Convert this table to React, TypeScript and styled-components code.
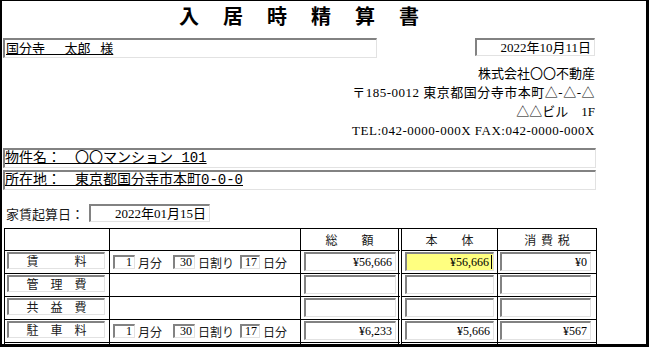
import styled, { createGlobalStyle, css } from 'styled-components'

const GlobalStyle = createGlobalStyle`
  html, body {
    margin: 0;
    padding: 0;
    background: #fff;
  }
  body {
    font-family: "Liberation Serif", "Noto Sans CJK JP", serif;
    color: #000;
    overflow: hidden;
  }
`

const sunken = css`
  box-sizing: border-box;
  background: #fff;
  border-top: 2px solid #828282;
  border-left: 2px solid #828282;
  border-right: 1px solid #e2e2e2;
  border-bottom: 1px solid #e2e2e2;
`

const Frame = styled.div`
  box-sizing: border-box;
  width: 649px;
  height: 347px;
  border-style: solid;
  border-color: #000;
  border-width: 1px 3px 3px 2px;
  background: #fff;
  overflow: hidden;
`

const Sheet = styled.div`
  width: 594px;
  margin-left: 1px;
  display: flex;
  flex-direction: column;
`

const Title = styled.h1`
  margin: 0;
  height: 37px;
  font-family: "Noto Sans CJK JP", sans-serif;
  font-size: 20px;
  font-weight: 700;
  line-height: 29px;
  text-align: center;
  letter-spacing: 24px;
  text-indent: 22px;
`

const TopRow = styled.div`
  display: flex;
  justify-content: space-between;
  align-items: flex-start;
  height: 20px;
  padding-right: 2px;
`

const NameField = styled.div`
  ${sunken};
  width: 374px;
  height: 20px;
  padding-left: 1px;
  font-size: 13px;
  line-height: 17px;
  white-space: pre;
  text-decoration: underline;
`

const DateField = styled.div<{ $width: number }>`
  ${sunken};
  width: ${p => p.$width}px;
  height: 18px;
  padding-right: 3px;
  font-size: 13px;
  line-height: 15px;
  text-align: right;
`

const Company = styled.div`
  margin-top: 6px;
  padding-right: 2px;
  text-align: right;
  font-size: 13px;
  line-height: 19px;
`

const CompanyLine = styled.div<{ $wide?: boolean }>`
  letter-spacing: ${p => (p.$wide ? 0.5 : 0)}px;
`

const PropertyList = styled.div`
  margin-top: 8px;
  display: flex;
  flex-direction: column;
  gap: 2px;
`

const PropertyField = styled.div`
  ${sunken};
  width: 593px;
  height: 20px;
  font-family: "Liberation Mono", "Noto Sans CJK JP", monospace;
  font-size: 14px;
  line-height: 17px;
  white-space: pre;
  text-decoration: underline;
`

const StartRow = styled.div`
  margin-top: 15px;
  display: flex;
  align-items: center;
  gap: 5px;
  padding-left: 3px;
  height: 16px;
`

const StartLabel = styled.span`
  font-family: "Noto Sans CJK JP", sans-serif;
  font-size: 13px;
  color: #1a1a1a;
`

const Table = styled.div`
  margin: 7px 0 0 1px;
  display: grid;
  grid-template-columns: 105px 191px 101px 96px 99px;
  grid-template-rows: 22px repeat(5, 23px);
  border-top: 1px solid #000;
  border-left: 1px solid #000;
`

const Cell = styled.div<{ $double?: boolean; $pad?: number }>`
  box-sizing: border-box;
  display: flex;
  align-items: center;
  padding-left: ${p => p.$pad ?? 0}px;
  border-bottom: 1px solid #000;
  border-right: ${p => (p.$double ? '4px double #000' : '1px solid #000')};
`

const HeadCell = styled(Cell)`
  justify-content: center;
  font-family: "Noto Sans CJK JP", sans-serif;
  font-size: 12px;
  color: #1a1a1a;
  word-spacing: 2px;
`

const LabelBox = styled.div`
  ${sunken};
  width: 98px;
  height: 17px;
  align-self: flex-start;
  margin-top: 1px;
  font-family: "Noto Sans CJK JP", sans-serif;
  font-size: 12px;
  line-height: 13px;
  text-align: center;
  color: #1a1a1a;
`

const NumBox = styled.div<{ $width: number }>`
  ${sunken};
  width: ${p => p.$width}px;
  height: 14px;
  padding-right: 2px;
  font-size: 12px;
  line-height: 11px;
  text-align: right;
`

const Unit = styled.span<{ $after: number }>`
  margin: 0 ${p => p.$after}px 0 3px;
  font-family: "Noto Sans CJK JP", sans-serif;
  font-size: 12px;
  color: #1a1a1a;
`

const AmountBox = styled.div<{ $width: number; $active?: boolean }>`
  ${sunken};
  width: ${p => p.$width}px;
  height: 19px;
  align-self: flex-start;
  margin-top: 1px;
  display: flex;
  justify-content: flex-end;
  align-items: center;
  padding-right: ${p => (p.$active ? 1 : 3)}px;
  font-size: 12px;
  background: ${p => (p.$active ? '#ffff80' : '#fff')};
`

const Caret = styled.span`
  width: 1px;
  height: 14px;
  margin-left: 2px;
  background: #000;
`

type Row = {
  label: string
  days?: boolean
  total: string
  base: string
  tax: string
  active?: boolean
}

const rows: Row[] = [
  { label: '賃　　　料', days: true, total: '¥56,666', base: '¥56,666', tax: '¥0', active: true },
  { label: '管　理　費', total: '', base: '', tax: '' },
  { label: '共　益　費', total: '', base: '', tax: '' },
  { label: '駐　車　料', days: true, total: '¥6,233', base: '¥5,666', tax: '¥567' },
]

function DayBreakdown() {
  return (
    <>
      <NumBox $width={22}>1</NumBox>
      <Unit $after={11}>月分</Unit>
      <NumBox $width={22}>30</NumBox>
      <Unit $after={6}>日割り</Unit>
      <NumBox $width={20}>17</NumBox>
      <Unit $after={0}>日分</Unit>
    </>
  )
}

export default function App() {
  return (
    <>
      <GlobalStyle />
      <Frame>
        <Sheet>
          <Title>入居時精算書</Title>

          <TopRow>
            <NameField>国分寺　  太郎   様</NameField>
            <DateField $width={120}>2022年10月11日</DateField>
          </TopRow>

          <Company>
            <CompanyLine>株式会社〇〇不動産</CompanyLine>
            <CompanyLine $wide>〒185-0012 東京都国分寺市本町△-△-△</CompanyLine>
            <CompanyLine>△△ビル　1F</CompanyLine>
            <CompanyLine $wide>TEL:042-0000-000X FAX:042-0000-000X</CompanyLine>
          </Company>

          <PropertyList>
            <PropertyField>物件名：　〇〇マンション 101</PropertyField>
            <PropertyField>所在地：　東京都国分寺市本町0-0-0</PropertyField>
          </PropertyList>

          <StartRow>
            <StartLabel>家賃起算日：</StartLabel>
            <DateField $width={121}>2022年01月15日</DateField>
          </StartRow>

          <Table>
            <HeadCell />
            <HeadCell />
            <HeadCell $double>総　　額</HeadCell>
            <HeadCell>本　　体</HeadCell>
            <HeadCell>消 費 税</HeadCell>

            {rows.map(r => (
              <>
                <Cell $pad={2}>
                  <LabelBox>{r.label}</LabelBox>
                </Cell>
                <Cell $pad={3}>{r.days && <DayBreakdown />}</Cell>
                <Cell $double $pad={3}>
                  <AmountBox $width={92}>{r.total}</AmountBox>
                </Cell>
                <Cell $pad={3}>
                  <AmountBox $width={89} $active={r.active}>
                    {r.base}
                    {r.active && <Caret />}
                  </AmountBox>
                </Cell>
                <Cell $pad={2}>
                  <AmountBox $width={91}>{r.tax}</AmountBox>
                </Cell>
              </>
            ))}

            <Cell />
            <Cell />
            <Cell $double />
            <Cell />
            <Cell />
          </Table>
        </Sheet>
      </Frame>
    </>
  )
}
